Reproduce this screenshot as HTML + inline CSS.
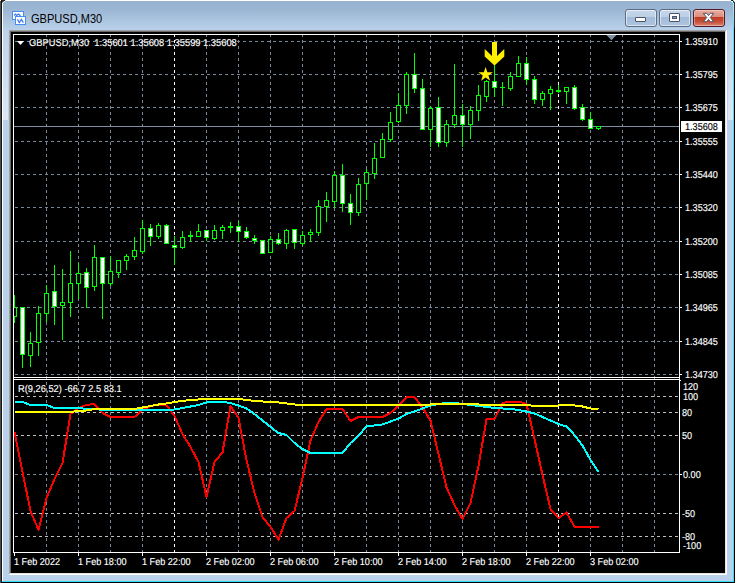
<!DOCTYPE html>
<html><head><meta charset="utf-8"><title>GBPUSD,M30</title>
<style>
html,body{margin:0;padding:0;}
body{width:737px;height:583px;overflow:hidden;background:#b9d1ea;position:relative;font-family:"Liberation Sans",sans-serif;}
.abs{position:absolute;}
#frame{left:0;top:0;width:737px;height:583px;}
#title{left:3px;top:1px;width:730px;height:29px;background:linear-gradient(#98b3d1 0%,#9bb6d3 28%,#b9d1ea 100%);}
#ttext{left:31px;top:12px;font-size:12px;line-height:14px;color:#000;white-space:nowrap;transform-origin:0 0;transform:scaleX(.92);}
#client{left:11px;top:32px;width:714px;height:541px;background:#000;}
.t{position:absolute;font-size:10px;line-height:12px;color:#fff;white-space:nowrap;transform-origin:0 0;transform:scaleX(.91);text-rendering:geometricPrecision;-webkit-text-stroke:0.15px currentColor;}
.btn{position:absolute;top:9px;width:30px;height:16px;border:1px solid #5e6c85;border-radius:3px;box-shadow:inset 0 0 0 1px rgba(255,255,255,.55);background:linear-gradient(#c6d7ea 0%,#bccfe5 44%,#a3bcd9 45%,#adc5e0 100%);}
#bclose{border-color:#56182a;background:linear-gradient(#e9ada0 0%,#db8d7e 44%,#bf3a20 45%,#c9523a 75%,#d98673 100%);box-shadow:inset 0 0 0 1px rgba(255,255,255,.35);}
svg{position:absolute;left:0;top:0;}
</style></head><body>
<div id="title" class="abs"></div>
<!-- outer edges -->
<div class="abs" style="left:3px;top:30px;width:5px;height:90px;background:linear-gradient(#bdd3eb,#dee8f5)"></div>
<div class="abs" style="left:728px;top:30px;width:5px;height:90px;background:linear-gradient(#bdd3eb,#dee8f5)"></div>
<div class="abs" style="left:0;top:0;width:737px;height:1px;background:#fff"></div>
<div class="abs" style="left:0;top:1px;width:1px;height:582px;background:#4d4d4d"></div>
<div class="abs" style="left:1px;top:0;width:1px;height:583px;background:#141414"></div>
<div class="abs" style="left:2px;top:3px;width:1px;height:578px;background:#fff"></div>
<div class="abs" style="left:733px;top:3px;width:1px;height:579px;background:linear-gradient(#aee9f8 0px,#58d7f7 26px,#46d6f7 300px,#34def8 579px)"></div>
<div class="abs" style="left:734px;top:2px;width:1px;height:581px;background:linear-gradient(#3a3232 0px,#3a3232 24px,#000 28px,#000 100%)"></div>
<div class="abs" style="left:735px;top:0;width:2px;height:583px;background:#fff"></div>
<div class="abs" style="left:2px;top:581px;width:732px;height:1px;background:#30e0f8"></div>
<div class="abs" style="left:1px;top:582px;width:734px;height:1px;background:#000"></div>
<!-- corners -->
<div class="abs" style="left:2px;top:0;width:3px;height:1px;background:#262626"></div>
<div class="abs" style="left:5px;top:0;width:1px;height:1px;background:#e6e0da"></div>
<div class="abs" style="left:2px;top:1px;width:1px;height:1px;background:#2a2a2a"></div>
<div class="abs" style="left:3px;top:1px;width:1px;height:1px;background:#777"></div>
<div class="abs" style="left:4px;top:1px;width:1px;height:1px;background:#eef2f6"></div>
<div class="abs" style="left:2px;top:2px;width:1px;height:1px;background:#999"></div>
<div class="abs" style="left:3px;top:2px;width:1px;height:1px;background:#e0e8f0"></div>
<div class="abs" style="left:731px;top:0;width:1px;height:1px;background:#153535"></div>
<div class="abs" style="left:732px;top:0;width:1px;height:1px;background:#050505"></div>
<div class="abs" style="left:733px;top:0;width:1px;height:1px;background:#d0d0d0"></div>
<div class="abs" style="left:731px;top:1px;width:2px;height:1px;background:#ccffff"></div>
<div class="abs" style="left:733px;top:1px;width:1px;height:1px;background:#0a3a40"></div>
<div class="abs" style="left:734px;top:1px;width:1px;height:1px;background:#ddd"></div>
<div class="abs" style="left:732px;top:2px;width:1px;height:1px;background:#b0e8f8"></div>
<div class="abs" style="left:733px;top:2px;width:1px;height:1px;background:#208090"></div>
<!-- sunken edge -->
<div class="abs" style="left:9px;top:30px;width:718px;height:545px;background:#fff"></div>
<div class="abs" style="left:9px;top:30px;width:717px;height:544px;background:#a0a0a0"></div>
<div class="abs" style="left:10px;top:31px;width:716px;height:543px;background:#e3e3e3"></div>
<div class="abs" style="left:10px;top:31px;width:715px;height:542px;background:#696969"></div>
<div id="client" class="abs"></div>
<!-- icon -->
<svg width="737" height="583" viewBox="0 0 737 583" shape-rendering="crispEdges">
<rect x="12" y="11" width="12" height="9" fill="#fff" stroke="none"/>
<rect x="12.5" y="11.5" width="11" height="8" fill="none" stroke="#4a8cf5"/>
<rect x="15" y="16" width="11" height="9" fill="#fff"/>
<rect x="15.5" y="16.5" width="10" height="8" fill="none" stroke="#4a8cf5"/>
<polyline shape-rendering="geometricPrecision" points="17.5,19.4 19.3,22.6 21.4,19.4 23.4,22.6" fill="none" stroke="#3c78ee" stroke-width="1.2"/>
<polyline shape-rendering="geometricPrecision" points="14,15.5 15.5,14.2 16.7,15.5 18.5,14 20.5,16" fill="none" stroke="#3c78ee" stroke-width="1.2"/>
<line x1="46.5" y1="34" x2="46.5" y2="552" stroke="#778899" stroke-dasharray="3 3"/>
<line x1="78.5" y1="34" x2="78.5" y2="552" stroke="#778899" stroke-dasharray="3 3"/>
<line x1="110.5" y1="34" x2="110.5" y2="552" stroke="#778899" stroke-dasharray="3 3"/>
<line x1="142.5" y1="34" x2="142.5" y2="552" stroke="#778899" stroke-dasharray="3 3"/>
<line x1="174.5" y1="34" x2="174.5" y2="552" stroke="#ffffff" stroke-dasharray="3 3"/>
<line x1="206.5" y1="34" x2="206.5" y2="552" stroke="#778899" stroke-dasharray="3 3"/>
<line x1="238.5" y1="34" x2="238.5" y2="552" stroke="#778899" stroke-dasharray="3 3"/>
<line x1="270.5" y1="34" x2="270.5" y2="552" stroke="#778899" stroke-dasharray="3 3"/>
<line x1="302.5" y1="34" x2="302.5" y2="552" stroke="#778899" stroke-dasharray="3 3"/>
<line x1="334.5" y1="34" x2="334.5" y2="552" stroke="#778899" stroke-dasharray="3 3"/>
<line x1="366.5" y1="34" x2="366.5" y2="552" stroke="#778899" stroke-dasharray="3 3"/>
<line x1="398.5" y1="34" x2="398.5" y2="552" stroke="#778899" stroke-dasharray="3 3"/>
<line x1="430.5" y1="34" x2="430.5" y2="552" stroke="#778899" stroke-dasharray="3 3"/>
<line x1="462.5" y1="34" x2="462.5" y2="552" stroke="#778899" stroke-dasharray="3 3"/>
<line x1="494.5" y1="34" x2="494.5" y2="552" stroke="#778899" stroke-dasharray="3 3"/>
<line x1="526.5" y1="34" x2="526.5" y2="552" stroke="#778899" stroke-dasharray="3 3"/>
<line x1="558.5" y1="34" x2="558.5" y2="552" stroke="#ffffff" stroke-dasharray="3 3"/>
<line x1="590.5" y1="34" x2="590.5" y2="552" stroke="#778899" stroke-dasharray="3 3"/>
<line x1="622.5" y1="34" x2="622.5" y2="552" stroke="#778899" stroke-dasharray="3 3"/>
<line x1="654.5" y1="34" x2="654.5" y2="552" stroke="#778899" stroke-dasharray="3 3"/>
<line x1="15" y1="41.5" x2="679" y2="41.5" stroke="#778899" stroke-dasharray="3 3"/>
<line x1="15" y1="74.5" x2="679" y2="74.5" stroke="#778899" stroke-dasharray="3 3"/>
<line x1="15" y1="107.5" x2="679" y2="107.5" stroke="#778899" stroke-dasharray="3 3"/>
<line x1="15" y1="141.5" x2="679" y2="141.5" stroke="#778899" stroke-dasharray="3 3"/>
<line x1="15" y1="174.5" x2="679" y2="174.5" stroke="#778899" stroke-dasharray="3 3"/>
<line x1="15" y1="207.5" x2="679" y2="207.5" stroke="#778899" stroke-dasharray="3 3"/>
<line x1="15" y1="241.5" x2="679" y2="241.5" stroke="#778899" stroke-dasharray="3 3"/>
<line x1="15" y1="274.5" x2="679" y2="274.5" stroke="#778899" stroke-dasharray="3 3"/>
<line x1="15" y1="307.5" x2="679" y2="307.5" stroke="#778899" stroke-dasharray="3 3"/>
<line x1="15" y1="341.5" x2="679" y2="341.5" stroke="#778899" stroke-dasharray="3 3"/>
<line x1="15" y1="374.5" x2="679" y2="374.5" stroke="#778899" stroke-dasharray="3 3"/>
<line x1="15" y1="396.5" x2="679" y2="396.5" stroke="#c0c0c0" stroke-dasharray="3 3"/>
<line x1="15" y1="412.5" x2="679" y2="412.5" stroke="#c0c0c0" stroke-dasharray="3 3"/>
<line x1="15" y1="435.5" x2="679" y2="435.5" stroke="#c0c0c0" stroke-dasharray="3 3"/>
<line x1="15" y1="474.5" x2="679" y2="474.5" stroke="#778899" stroke-dasharray="3 3"/>
<line x1="15" y1="513.5" x2="679" y2="513.5" stroke="#c0c0c0" stroke-dasharray="3 3"/>
<line x1="15" y1="536.5" x2="679" y2="536.5" stroke="#c0c0c0" stroke-dasharray="3 3"/>
<rect x="14" y="126" width="665" height="1" fill="#7f8fa0"/>
<rect x="14" y="295" width="1" height="28" fill="#00ff00"/>
<rect x="12" y="307" width="5" height="10" fill="#00ff00"/>
<rect x="13" y="308" width="3" height="8" fill="#000000"/>
<rect x="22" y="307" width="1" height="61" fill="#00ff00"/>
<rect x="20" y="307" width="5" height="48" fill="#00ff00"/>
<rect x="21" y="308" width="3" height="46" fill="#ffffff"/>
<rect x="30" y="332" width="1" height="35" fill="#00ff00"/>
<rect x="28" y="343" width="5" height="13" fill="#00ff00"/>
<rect x="29" y="344" width="3" height="11" fill="#000000"/>
<rect x="38" y="306" width="1" height="50" fill="#00ff00"/>
<rect x="36" y="313" width="5" height="30" fill="#00ff00"/>
<rect x="37" y="314" width="3" height="28" fill="#000000"/>
<rect x="46" y="285" width="1" height="37" fill="#00ff00"/>
<rect x="44" y="293" width="5" height="21" fill="#00ff00"/>
<rect x="45" y="294" width="3" height="19" fill="#000000"/>
<rect x="54" y="265" width="1" height="60" fill="#00ff00"/>
<rect x="52" y="291" width="5" height="16" fill="#00ff00"/>
<rect x="53" y="292" width="3" height="14" fill="#ffffff"/>
<rect x="62" y="269" width="1" height="71" fill="#00ff00"/>
<rect x="60" y="302" width="5" height="4" fill="#00ff00"/>
<rect x="61" y="303" width="3" height="2" fill="#000000"/>
<rect x="70" y="251" width="1" height="66" fill="#00ff00"/>
<rect x="68" y="283" width="5" height="20" fill="#00ff00"/>
<rect x="69" y="284" width="3" height="18" fill="#000000"/>
<rect x="78" y="263" width="1" height="36" fill="#00ff00"/>
<rect x="76" y="273" width="5" height="11" fill="#00ff00"/>
<rect x="77" y="274" width="3" height="9" fill="#000000"/>
<rect x="86" y="268" width="1" height="40" fill="#00ff00"/>
<rect x="84" y="272" width="5" height="16" fill="#00ff00"/>
<rect x="85" y="273" width="3" height="14" fill="#ffffff"/>
<rect x="94" y="245" width="1" height="46" fill="#00ff00"/>
<rect x="92" y="257" width="5" height="30" fill="#00ff00"/>
<rect x="93" y="258" width="3" height="28" fill="#000000"/>
<rect x="102" y="257" width="1" height="62" fill="#00ff00"/>
<rect x="100" y="257" width="5" height="27" fill="#00ff00"/>
<rect x="101" y="258" width="3" height="25" fill="#ffffff"/>
<rect x="110" y="256" width="1" height="30" fill="#00ff00"/>
<rect x="108" y="271" width="5" height="13" fill="#00ff00"/>
<rect x="109" y="272" width="3" height="11" fill="#000000"/>
<rect x="118" y="260" width="1" height="18" fill="#00ff00"/>
<rect x="116" y="260" width="5" height="13" fill="#00ff00"/>
<rect x="117" y="261" width="3" height="11" fill="#000000"/>
<rect x="126" y="254" width="1" height="16" fill="#00ff00"/>
<rect x="124" y="256" width="5" height="5" fill="#00ff00"/>
<rect x="125" y="257" width="3" height="3" fill="#000000"/>
<rect x="134" y="237" width="1" height="23" fill="#00ff00"/>
<rect x="132" y="250" width="5" height="7" fill="#00ff00"/>
<rect x="133" y="251" width="3" height="5" fill="#000000"/>
<rect x="142" y="220" width="1" height="34" fill="#00ff00"/>
<rect x="140" y="228" width="5" height="24" fill="#00ff00"/>
<rect x="141" y="229" width="3" height="22" fill="#000000"/>
<rect x="150" y="224" width="1" height="22" fill="#00ff00"/>
<rect x="148" y="228" width="5" height="9" fill="#00ff00"/>
<rect x="149" y="229" width="3" height="7" fill="#ffffff"/>
<rect x="158" y="223" width="1" height="16" fill="#00ff00"/>
<rect x="156" y="225" width="5" height="12" fill="#00ff00"/>
<rect x="157" y="226" width="3" height="10" fill="#000000"/>
<rect x="166" y="224" width="1" height="20" fill="#00ff00"/>
<rect x="164" y="225" width="5" height="19" fill="#00ff00"/>
<rect x="165" y="226" width="3" height="17" fill="#ffffff"/>
<rect x="174" y="236" width="1" height="29" fill="#00ff00"/>
<rect x="172" y="245" width="5" height="3" fill="#00ff00"/>
<rect x="173" y="246" width="3" height="1" fill="#ffffff"/>
<rect x="182" y="231" width="1" height="18" fill="#00ff00"/>
<rect x="180" y="237" width="5" height="11" fill="#00ff00"/>
<rect x="181" y="238" width="3" height="9" fill="#000000"/>
<rect x="190" y="231" width="1" height="11" fill="#00ff00"/>
<rect x="188" y="235" width="5" height="2" fill="#00ff00"/>
<rect x="198" y="224" width="1" height="13" fill="#00ff00"/>
<rect x="196" y="231" width="5" height="6" fill="#00ff00"/>
<rect x="197" y="232" width="3" height="4" fill="#000000"/>
<rect x="206" y="230" width="1" height="11" fill="#00ff00"/>
<rect x="204" y="230" width="5" height="8" fill="#00ff00"/>
<rect x="205" y="231" width="3" height="6" fill="#ffffff"/>
<rect x="214" y="225" width="1" height="15" fill="#00ff00"/>
<rect x="212" y="230" width="5" height="9" fill="#00ff00"/>
<rect x="213" y="231" width="3" height="7" fill="#000000"/>
<rect x="222" y="225" width="1" height="14" fill="#00ff00"/>
<rect x="220" y="227" width="5" height="4" fill="#00ff00"/>
<rect x="221" y="228" width="3" height="2" fill="#000000"/>
<rect x="230" y="222" width="1" height="11" fill="#00ff00"/>
<rect x="228" y="226" width="5" height="2" fill="#00ff00"/>
<rect x="238" y="221" width="1" height="21" fill="#00ff00"/>
<rect x="236" y="226" width="5" height="6" fill="#00ff00"/>
<rect x="237" y="227" width="3" height="4" fill="#ffffff"/>
<rect x="246" y="227" width="1" height="12" fill="#00ff00"/>
<rect x="244" y="231" width="5" height="7" fill="#00ff00"/>
<rect x="245" y="232" width="3" height="5" fill="#ffffff"/>
<rect x="254" y="235" width="1" height="9" fill="#00ff00"/>
<rect x="252" y="238" width="5" height="3" fill="#00ff00"/>
<rect x="253" y="239" width="3" height="1" fill="#ffffff"/>
<rect x="262" y="240" width="1" height="14" fill="#00ff00"/>
<rect x="260" y="240" width="5" height="14" fill="#00ff00"/>
<rect x="261" y="241" width="3" height="12" fill="#ffffff"/>
<rect x="270" y="236" width="1" height="17" fill="#00ff00"/>
<rect x="268" y="239" width="5" height="14" fill="#00ff00"/>
<rect x="269" y="240" width="3" height="12" fill="#000000"/>
<rect x="278" y="233" width="1" height="12" fill="#00ff00"/>
<rect x="276" y="239" width="5" height="5" fill="#00ff00"/>
<rect x="277" y="240" width="3" height="3" fill="#ffffff"/>
<rect x="286" y="229" width="1" height="20" fill="#00ff00"/>
<rect x="284" y="230" width="5" height="14" fill="#00ff00"/>
<rect x="285" y="231" width="3" height="12" fill="#000000"/>
<rect x="294" y="229" width="1" height="20" fill="#00ff00"/>
<rect x="292" y="229" width="5" height="14" fill="#00ff00"/>
<rect x="293" y="230" width="3" height="12" fill="#ffffff"/>
<rect x="302" y="231" width="1" height="15" fill="#00ff00"/>
<rect x="300" y="235" width="5" height="9" fill="#00ff00"/>
<rect x="301" y="236" width="3" height="7" fill="#000000"/>
<rect x="310" y="229" width="1" height="13" fill="#00ff00"/>
<rect x="308" y="232" width="5" height="3" fill="#00ff00"/>
<rect x="309" y="233" width="3" height="1" fill="#000000"/>
<rect x="318" y="200" width="1" height="36" fill="#00ff00"/>
<rect x="316" y="206" width="5" height="27" fill="#00ff00"/>
<rect x="317" y="207" width="3" height="25" fill="#000000"/>
<rect x="326" y="192" width="1" height="30" fill="#00ff00"/>
<rect x="324" y="200" width="5" height="7" fill="#00ff00"/>
<rect x="325" y="201" width="3" height="5" fill="#000000"/>
<rect x="334" y="171" width="1" height="37" fill="#00ff00"/>
<rect x="332" y="175" width="5" height="27" fill="#00ff00"/>
<rect x="333" y="176" width="3" height="25" fill="#000000"/>
<rect x="342" y="164" width="1" height="48" fill="#00ff00"/>
<rect x="340" y="175" width="5" height="29" fill="#00ff00"/>
<rect x="341" y="176" width="3" height="27" fill="#ffffff"/>
<rect x="350" y="194" width="1" height="31" fill="#00ff00"/>
<rect x="348" y="203" width="5" height="10" fill="#00ff00"/>
<rect x="349" y="204" width="3" height="8" fill="#ffffff"/>
<rect x="358" y="178" width="1" height="38" fill="#00ff00"/>
<rect x="356" y="184" width="5" height="29" fill="#00ff00"/>
<rect x="357" y="185" width="3" height="27" fill="#000000"/>
<rect x="366" y="169" width="1" height="31" fill="#00ff00"/>
<rect x="364" y="172" width="5" height="12" fill="#00ff00"/>
<rect x="365" y="173" width="3" height="10" fill="#000000"/>
<rect x="374" y="143" width="1" height="36" fill="#00ff00"/>
<rect x="372" y="158" width="5" height="16" fill="#00ff00"/>
<rect x="373" y="159" width="3" height="14" fill="#000000"/>
<rect x="382" y="133" width="1" height="25" fill="#00ff00"/>
<rect x="380" y="139" width="5" height="19" fill="#00ff00"/>
<rect x="381" y="140" width="3" height="17" fill="#000000"/>
<rect x="390" y="112" width="1" height="30" fill="#00ff00"/>
<rect x="388" y="122" width="5" height="18" fill="#00ff00"/>
<rect x="389" y="123" width="3" height="16" fill="#000000"/>
<rect x="398" y="93" width="1" height="30" fill="#00ff00"/>
<rect x="396" y="105" width="5" height="17" fill="#00ff00"/>
<rect x="397" y="106" width="3" height="15" fill="#000000"/>
<rect x="406" y="72" width="1" height="42" fill="#00ff00"/>
<rect x="404" y="74" width="5" height="32" fill="#00ff00"/>
<rect x="405" y="75" width="3" height="30" fill="#000000"/>
<rect x="414" y="53" width="1" height="40" fill="#00ff00"/>
<rect x="412" y="74" width="5" height="15" fill="#00ff00"/>
<rect x="413" y="75" width="3" height="13" fill="#ffffff"/>
<rect x="422" y="79" width="1" height="51" fill="#00ff00"/>
<rect x="420" y="88" width="5" height="42" fill="#00ff00"/>
<rect x="421" y="89" width="3" height="40" fill="#ffffff"/>
<rect x="430" y="106" width="1" height="41" fill="#00ff00"/>
<rect x="428" y="108" width="5" height="22" fill="#00ff00"/>
<rect x="429" y="109" width="3" height="20" fill="#000000"/>
<rect x="438" y="97" width="1" height="50" fill="#00ff00"/>
<rect x="436" y="107" width="5" height="36" fill="#00ff00"/>
<rect x="437" y="108" width="3" height="34" fill="#ffffff"/>
<rect x="446" y="120" width="1" height="27" fill="#00ff00"/>
<rect x="444" y="124" width="5" height="19" fill="#00ff00"/>
<rect x="445" y="125" width="3" height="17" fill="#000000"/>
<rect x="454" y="64" width="1" height="64" fill="#00ff00"/>
<rect x="452" y="115" width="5" height="10" fill="#00ff00"/>
<rect x="453" y="116" width="3" height="8" fill="#000000"/>
<rect x="462" y="104" width="1" height="43" fill="#00ff00"/>
<rect x="460" y="115" width="5" height="10" fill="#00ff00"/>
<rect x="461" y="116" width="3" height="8" fill="#ffffff"/>
<rect x="470" y="106" width="1" height="33" fill="#00ff00"/>
<rect x="468" y="110" width="5" height="15" fill="#00ff00"/>
<rect x="469" y="111" width="3" height="13" fill="#000000"/>
<rect x="478" y="85" width="1" height="36" fill="#00ff00"/>
<rect x="476" y="95" width="5" height="16" fill="#00ff00"/>
<rect x="477" y="96" width="3" height="14" fill="#000000"/>
<rect x="486" y="80" width="1" height="22" fill="#00ff00"/>
<rect x="484" y="81" width="5" height="16" fill="#00ff00"/>
<rect x="485" y="82" width="3" height="14" fill="#000000"/>
<rect x="494" y="65" width="1" height="32" fill="#00ff00"/>
<rect x="492" y="81" width="5" height="7" fill="#00ff00"/>
<rect x="493" y="82" width="3" height="5" fill="#ffffff"/>
<rect x="502" y="82" width="1" height="24" fill="#00ff00"/>
<rect x="500" y="87" width="5" height="1" fill="#00ff00"/>
<rect x="510" y="72" width="1" height="19" fill="#00ff00"/>
<rect x="508" y="76" width="5" height="13" fill="#00ff00"/>
<rect x="509" y="77" width="3" height="11" fill="#000000"/>
<rect x="518" y="56" width="1" height="21" fill="#00ff00"/>
<rect x="516" y="63" width="5" height="14" fill="#00ff00"/>
<rect x="517" y="64" width="3" height="12" fill="#000000"/>
<rect x="526" y="57" width="1" height="28" fill="#00ff00"/>
<rect x="524" y="63" width="5" height="17" fill="#00ff00"/>
<rect x="525" y="64" width="3" height="15" fill="#ffffff"/>
<rect x="534" y="76" width="1" height="28" fill="#00ff00"/>
<rect x="532" y="79" width="5" height="21" fill="#00ff00"/>
<rect x="533" y="80" width="3" height="19" fill="#ffffff"/>
<rect x="542" y="91" width="1" height="15" fill="#00ff00"/>
<rect x="540" y="93" width="5" height="7" fill="#00ff00"/>
<rect x="541" y="94" width="3" height="5" fill="#000000"/>
<rect x="550" y="86" width="1" height="24" fill="#00ff00"/>
<rect x="548" y="89" width="5" height="5" fill="#00ff00"/>
<rect x="549" y="90" width="3" height="3" fill="#000000"/>
<rect x="558" y="85" width="1" height="8" fill="#00ff00"/>
<rect x="556" y="90" width="5" height="2" fill="#00ff00"/>
<rect x="566" y="87" width="1" height="17" fill="#00ff00"/>
<rect x="564" y="87" width="5" height="5" fill="#00ff00"/>
<rect x="565" y="88" width="3" height="3" fill="#000000"/>
<rect x="574" y="85" width="1" height="25" fill="#00ff00"/>
<rect x="572" y="87" width="5" height="22" fill="#00ff00"/>
<rect x="573" y="88" width="3" height="20" fill="#ffffff"/>
<rect x="582" y="104" width="1" height="17" fill="#00ff00"/>
<rect x="580" y="107" width="5" height="13" fill="#00ff00"/>
<rect x="581" y="108" width="3" height="11" fill="#ffffff"/>
<rect x="590" y="112" width="1" height="17" fill="#00ff00"/>
<rect x="588" y="119" width="5" height="10" fill="#00ff00"/>
<rect x="589" y="120" width="3" height="8" fill="#ffffff"/>
<rect x="598" y="126" width="1" height="4" fill="#00ff00"/>
<rect x="596" y="126" width="5" height="3" fill="#00ff00"/>
<rect x="597" y="127" width="3" height="1" fill="#000000"/>
<rect x="11" y="290" width="2" height="40" fill="#000"/>
<polygon shape-rendering="geometricPrecision" points="492,42 497,42 497,56 504.3,49 504.3,56.5 494.5,65.5 484.7,56.5 484.7,49 492,56" fill="#fff000"/>
<polygon shape-rendering="geometricPrecision" points="485.60,66.90 487.36,72.17 492.92,72.22 488.45,75.53 490.13,80.83 485.60,77.60 481.07,80.83 482.75,75.53 478.28,72.22 483.84,72.17" fill="#fff000"/>
<polyline shape-rendering="crispEdges" points="14.5,432 22.5,472 30.5,511 38.5,530 46.5,498 54.5,479 62.5,463 70.5,414 78.5,408 86.5,405 94.5,404 102.5,413 110.5,417 118.5,417 126.5,417 134.5,417 142.5,410 150.5,406 158.5,405 166.5,405 174.5,416 182.5,434 190.5,447 198.5,462 206.5,497 214.5,462 222.5,452.5 230.5,406 238.5,418 246.5,460 254.5,493 262.5,517 270.5,527 278.5,539.5 286.5,518 294.5,511 302.5,478 310.5,440.5 318.5,422 326.5,409 334.5,409 342.5,409 350.5,421 358.5,417 366.5,417 374.5,417 382.5,417 390.5,413 398.5,405.5 406.5,397.5 414.5,397 422.5,407.5 430.5,420.5 438.5,454 446.5,487.5 454.5,505 462.5,519 470.5,503 478.5,466 486.5,419 494.5,419 502.5,403 510.5,401.5 518.5,401.5 526.5,404 534.5,439 542.5,475 550.5,509 558.5,518 566.5,512.5 574.5,526.5 582.5,526.5 590.5,526.5 598.5,526.5" fill="none" stroke="#ff0000" stroke-width="2" stroke-linejoin="round"/>
<polyline shape-rendering="crispEdges" points="14.5,402 22.5,402 30.5,405 38.5,405 46.5,405 54.5,408 62.5,408 70.5,408 78.5,408 86.5,409 94.5,409 102.5,410 110.5,410 118.5,410 126.5,410 134.5,410 142.5,410 150.5,410 158.5,410 166.5,410 174.5,409.5 182.5,408 190.5,406.5 198.5,405 206.5,402.5 214.5,402 222.5,402 230.5,403 238.5,405.5 246.5,408.5 254.5,414 262.5,420.5 270.5,427 278.5,433 286.5,435 294.5,443 302.5,449 310.5,453 318.5,453 326.5,453 334.5,453 342.5,453 350.5,443 358.5,436 366.5,426 374.5,425.5 382.5,424.5 390.5,421.5 398.5,418.5 406.5,414 414.5,411.5 422.5,408.5 430.5,405.5 438.5,404 446.5,403 454.5,403 462.5,404 470.5,405 478.5,406 486.5,407 494.5,408 502.5,408.5 510.5,409 518.5,410 526.5,411.5 534.5,413.5 542.5,417 550.5,420.5 558.5,424 566.5,426.5 574.5,435 582.5,445.5 590.5,460 598.5,472" fill="none" stroke="#00ffff" stroke-width="2" stroke-linejoin="round"/>
<polyline shape-rendering="crispEdges" points="14.5,412 22.5,412 30.5,412 38.5,412 46.5,412 54.5,412 62.5,412 70.5,412 78.5,411 86.5,410.5 94.5,409 102.5,409 110.5,409 118.5,409 126.5,409 134.5,409 142.5,407.5 150.5,406 158.5,404.5 166.5,403.5 174.5,402 182.5,401 190.5,400 198.5,399.5 206.5,399 214.5,399 222.5,399 230.5,399 238.5,399 246.5,400 254.5,401 262.5,401.5 270.5,402 278.5,402.5 286.5,403.5 294.5,404.5 302.5,404.5 310.5,404.5 318.5,404.5 326.5,404.5 334.5,404.5 342.5,404.5 350.5,404.5 358.5,404.5 366.5,404.5 374.5,404.5 382.5,404.5 390.5,404.5 398.5,404.5 406.5,404.5 414.5,404.5 422.5,404.5 430.5,404.5 438.5,404 446.5,404 454.5,404 462.5,404 470.5,404 478.5,404.5 486.5,405 494.5,405 502.5,405 510.5,405 518.5,405 526.5,405 534.5,406 542.5,406 550.5,406 558.5,405.5 566.5,405 574.5,405.5 582.5,406.5 590.5,408.5 598.5,409" fill="none" stroke="#ffff00" stroke-width="2" stroke-linejoin="round"/>
<rect x="13" y="34" width="667" height="1" fill="#ffffff"/>
<rect x="13" y="34" width="1" height="519" fill="#ffffff"/>
<rect x="679" y="34" width="1" height="519" fill="#ffffff"/>
<rect x="13" y="377" width="667" height="1" fill="#ffffff"/>
<rect x="13" y="379" width="667" height="1" fill="#ffffff"/>
<rect x="13" y="552" width="667" height="1" fill="#ffffff"/>
<rect x="680" y="41" width="2" height="1" fill="#ffffff"/>
<rect x="680" y="74" width="2" height="1" fill="#ffffff"/>
<rect x="680" y="107" width="2" height="1" fill="#ffffff"/>
<rect x="680" y="141" width="2" height="1" fill="#ffffff"/>
<rect x="680" y="174" width="2" height="1" fill="#ffffff"/>
<rect x="680" y="207" width="2" height="1" fill="#ffffff"/>
<rect x="680" y="241" width="2" height="1" fill="#ffffff"/>
<rect x="680" y="274" width="2" height="1" fill="#ffffff"/>
<rect x="680" y="307" width="2" height="1" fill="#ffffff"/>
<rect x="680" y="341" width="2" height="1" fill="#ffffff"/>
<rect x="680" y="374" width="2" height="1" fill="#ffffff"/>
<rect x="680" y="474" width="2" height="1" fill="#ffffff"/>
<rect x="680" y="380" width="1" height="1" fill="#ffffff"/>
<rect x="14" y="553" width="1" height="3" fill="#ffffff"/>
<rect x="78" y="553" width="1" height="3" fill="#ffffff"/>
<rect x="142" y="553" width="1" height="3" fill="#ffffff"/>
<rect x="206" y="553" width="1" height="3" fill="#ffffff"/>
<rect x="270" y="553" width="1" height="3" fill="#ffffff"/>
<rect x="334" y="553" width="1" height="3" fill="#ffffff"/>
<rect x="398" y="553" width="1" height="3" fill="#ffffff"/>
<rect x="462" y="553" width="1" height="3" fill="#ffffff"/>
<rect x="526" y="553" width="1" height="3" fill="#ffffff"/>
<rect x="590" y="553" width="1" height="3" fill="#ffffff"/>
<polygon points="606.5,35 616.5,35 611.5,40.2" fill="#7f8fa0" shape-rendering="geometricPrecision"/>
<polygon points="17,41 24,41 20.5,45" fill="#fff" shape-rendering="geometricPrecision"/>
<rect x="681" y="121" width="41" height="11" fill="#ffffff"/>
</svg>
<div id="ttext" class="abs">GBPUSD,M30</div>
<div class="btn" style="left:625px"><div class="abs" style="left:9px;top:7px;width:9px;height:3px;background:#fff;border:1px solid #4a5568;border-radius:1px"></div></div>
<div class="btn" style="left:659px"><div class="abs" style="left:9px;top:3px;width:9px;height:7px;background:#fff;border:1px solid #4a5568;border-radius:1px"></div><div class="abs" style="left:12px;top:6px;width:3px;height:1px;background:#7a9cc8;border:1px solid #4a5568"></div></div>
<div class="btn" id="bclose" style="left:693px"><svg width="13" height="11" viewBox="-1 -1 13 11" style="left:8px;top:2px" shape-rendering="geometricPrecision"><path d="M0.3,0.3 L3.6,0.3 L5.5,2.5 L7.4,0.3 L10.7,0.3 L7.3,4.5 L10.7,8.7 L7.4,8.7 L5.5,6.5 L3.6,8.7 L0.3,8.7 L3.7,4.5 Z" fill="#fff" stroke="#4a5262" stroke-width="1" stroke-linejoin="round"/></svg></div>
<div class="t" style="left:685px;top:37px">1.35910</div>
<div class="t" style="left:685px;top:70px">1.35795</div>
<div class="t" style="left:685px;top:103px">1.35675</div>
<div class="t" style="left:685px;top:137px">1.35555</div>
<div class="t" style="left:685px;top:170px">1.35440</div>
<div class="t" style="left:685px;top:203px">1.35320</div>
<div class="t" style="left:685px;top:237px">1.35200</div>
<div class="t" style="left:685px;top:270px">1.35085</div>
<div class="t" style="left:685px;top:303px">1.34965</div>
<div class="t" style="left:685px;top:337px">1.34845</div>
<div class="t" style="left:685px;top:370px">1.34730</div>
<div class="t" style="left:685.3px;top:122px;color:#000">1.35608</div>
<div class="t" style="left:683px;top:382px">120</div>
<div class="t" style="left:683px;top:392px">100</div>
<div class="t" style="left:682px;top:408px">80</div>
<div class="t" style="left:682px;top:431px">50</div>
<div class="t" style="left:683px;top:470px">0.00</div>
<div class="t" style="left:682px;top:509px">-50</div>
<div class="t" style="left:682px;top:532px">-80</div>
<div class="t" style="left:683px;top:541px">-100</div>
<div class="t" style="left:14px;top:557px">1 Feb 2022</div>
<div class="t" style="left:78px;top:557px">1 Feb 18:00</div>
<div class="t" style="left:142px;top:557px">1 Feb 22:00</div>
<div class="t" style="left:206px;top:557px">2 Feb 02:00</div>
<div class="t" style="left:270px;top:557px">2 Feb 06:00</div>
<div class="t" style="left:334px;top:557px">2 Feb 10:00</div>
<div class="t" style="left:398px;top:557px">2 Feb 14:00</div>
<div class="t" style="left:462px;top:557px">2 Feb 18:00</div>
<div class="t" style="left:526px;top:557px">2 Feb 22:00</div>
<div class="t" style="left:590px;top:557px">3 Feb 02:00</div>
<div class="t" style="left:28.7px;top:38px;transform:scaleX(.932)">GBPUSD,M30&nbsp; 1.35601 1.35608 1.35599 1.35608</div>
<div class="t" style="left:18px;top:383.5px;transform:scaleX(.928)">R(9,26,52) -66.7 2.5 83.1</div>
</body></html>
